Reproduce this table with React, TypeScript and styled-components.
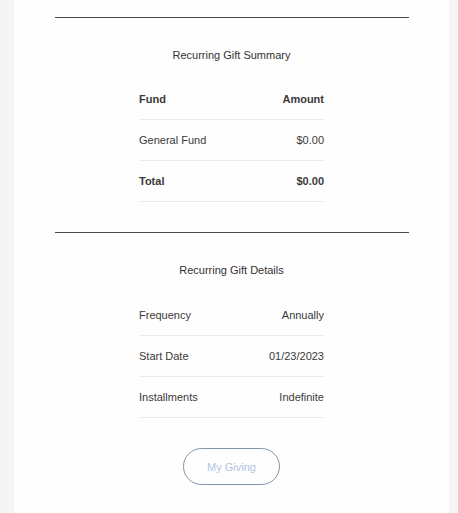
import React from "react";
import styled, { createGlobalStyle } from "styled-components";

const Global = createGlobalStyle`
  html, body { margin: 0; padding: 0; background: #f5f5f5; }
  body { font-family: "Liberation Sans", Arial, sans-serif; }
`;

const Page = styled.div`
  min-height: 513px;
  background: #f5f5f5;
  padding: 0 9px 0 14px;
  display: flex;
`;

const Panel = styled.main`
  flex: 1;
  background: #fefefe;
  padding: 17px 40px 28px 41px;
  display: flex;
  flex-direction: column;
`;

const Rule = styled.hr`
  margin: 0;
  border: 0;
  height: 1px;
  background: #4a4a4a;
`;

const Section = styled.section<{ $gapAfter: number }>`
  display: flex;
  flex-direction: column;
  align-items: center;
  padding-right: 1px;
  margin-bottom: ${(p) => p.$gapAfter}px;
`;

const Title = styled.h2`
  margin: 31px 0 0;
  font-size: 11px;
  line-height: 13px;
  font-weight: normal;
  color: #333;
`;

const Table = styled.div<{ $top: number }>`
  width: 185px;
  margin-top: ${(p) => p.$top}px;
  display: flex;
  flex-direction: column;
`;

const Row = styled.div<{ $bold?: boolean }>`
  height: 40px;
  border-bottom: 1px solid #ececec;
  display: flex;
  align-items: center;
  justify-content: space-between;
  font-size: 11px;
  color: #3a3a3a;
  font-weight: ${(p) => (p.$bold ? "bold" : "normal")};
`;

const Button = styled.button`
  width: 97px;
  height: 37px;
  border: 1px solid #8494a6;
  border-radius: 19px;
  background: transparent;
  font-family: "Liberation Sans", Arial, sans-serif;
  font-size: 11px;
  color: #b0c4de;
  cursor: pointer;
`;

const Actions = styled.div`
  display: flex;
  justify-content: center;
  padding-right: 1px;
  margin-top: 30px;
`;

type Line = { label: string; value: string; bold?: boolean };

const summary: Line[] = [
  { label: "Fund", value: "Amount", bold: true },
  { label: "General Fund", value: "$0.00" },
  { label: "Total", value: "$0.00", bold: true },
];

const details: Line[] = [
  { label: "Frequency", value: "Annually" },
  { label: "Start Date", value: "01/23/2023" },
  { label: "Installments", value: "Indefinite" },
];

function Rows({ lines, top }: { lines: Line[]; top: number }) {
  return (
    <Table $top={top}>
      {lines.map((l) => (
        <Row key={l.label} $bold={l.bold}>
          <span>{l.label}</span>
          <span>{l.value}</span>
        </Row>
      ))}
    </Table>
  );
}

export default function App() {
  return (
    <>
      <Global />
      <Page>
        <Panel>
          <Rule />
          <Section $gapAfter={30}>
            <Title>Recurring Gift Summary</Title>
            <Rows lines={summary} top={17} />
          </Section>
          <Rule />
          <Section $gapAfter={0}>
            <Title>Recurring Gift Details</Title>
            <Rows lines={details} top={18} />
          </Section>
          <Actions>
            <Button>My Giving</Button>
          </Actions>
        </Panel>
      </Page>
    </>
  );
}
